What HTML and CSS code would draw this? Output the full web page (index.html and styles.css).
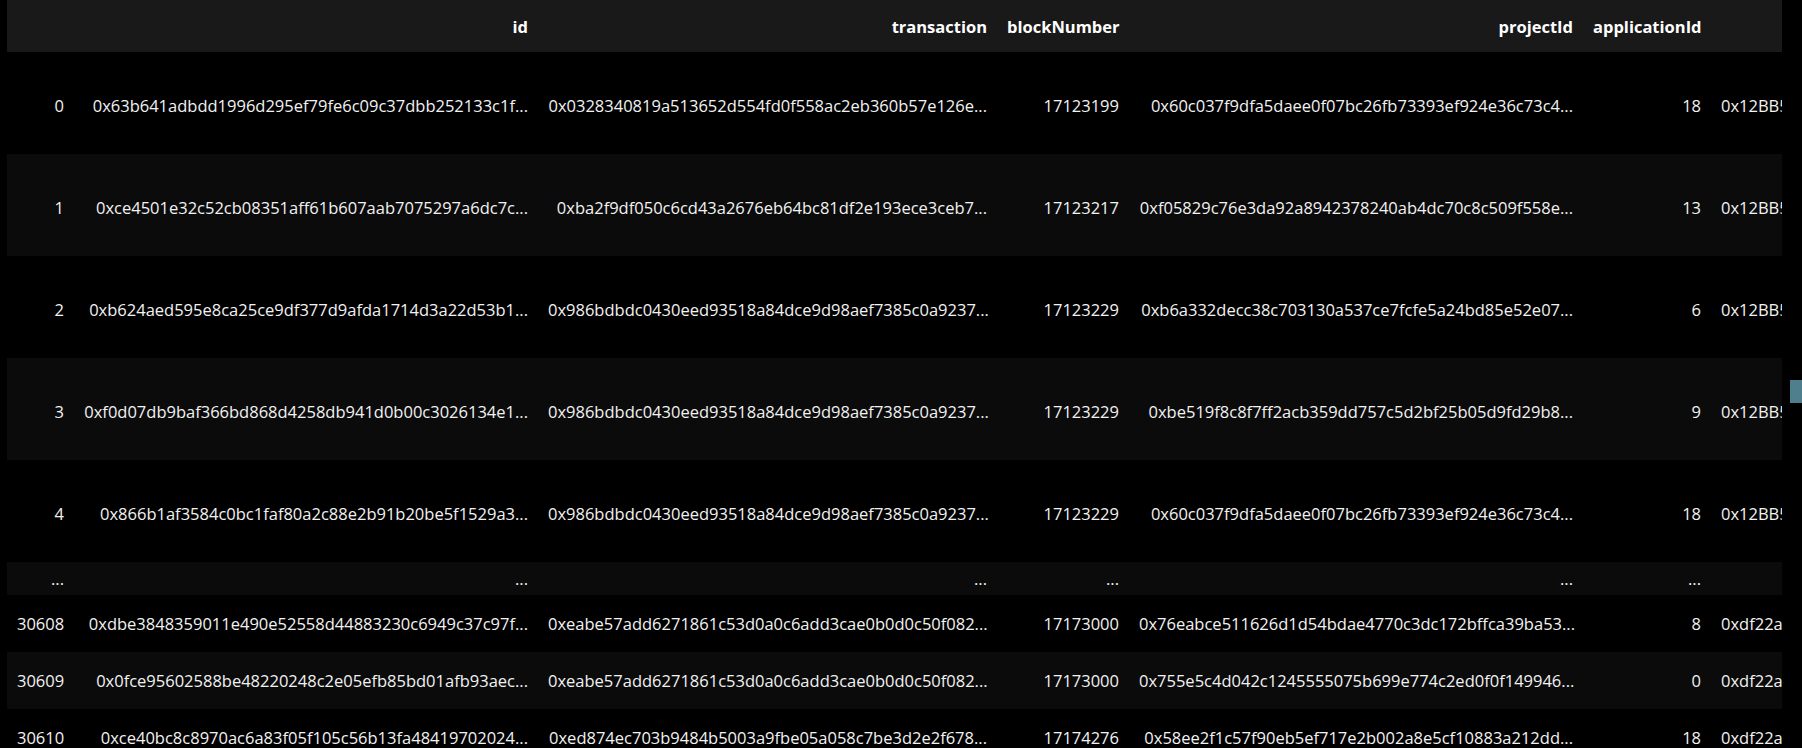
FILE: index.html
```html
<!DOCTYPE html>
<html>
  <head>
    <meta charset="utf-8">
    <title>DataFrame output</title>
    <link rel="stylesheet" href="styles.css">
  </head>
  <body>
    <div class="output">
      <div class="frame">
        <table class="dataframe">
          <colgroup>
            <col class="c-index">
            <col class="c-id">
            <col class="c-tx">
            <col class="c-block">
            <col class="c-project">
            <col class="c-app">
            <col class="c-round">
          </colgroup>
          <thead>
            <tr>
              <th></th>
              <th>id</th>
              <th>transaction</th>
              <th>blockNumber</th>
              <th>projectId</th>
              <th>applicationId</th>
              <th>roundId</th>
            </tr>
          </thead>
          <tbody>
            <tr class="tall">
              <th>0</th>
              <td>0x63b641adbdd1996d295ef79fe6c09c37dbb252133c1f...</td>
              <td>0x0328340819a513652d554fd0f558ac2eb360b57e126e...</td>
              <td>17123199</td>
              <td>0x60c037f9dfa5daee0f07bc26fb73393ef924e36c73c4...</td>
              <td>18</td>
              <td class="last">0x12BB5BBBFE596dbc489A209299B8302c3300fa40</td>
            </tr>
            <tr class="tall">
              <th>1</th>
              <td>0xce4501e32c52cb08351aff61b607aab7075297a6dc7c...</td>
              <td>0xba2f9df050c6cd43a2676eb64bc81df2e193ece3ceb7...</td>
              <td>17123217</td>
              <td>0xf05829c76e3da92a8942378240ab4dc70c8c509f558e...</td>
              <td>13</td>
              <td class="last">0x12BB5BBBFE596dbc489A209299B8302c3300fa40</td>
            </tr>
            <tr class="tall">
              <th>2</th>
              <td>0xb624aed595e8ca25ce9df377d9afda1714d3a22d53b1...</td>
              <td>0x986bdbdc0430eed93518a84dce9d98aef7385c0a9237...</td>
              <td>17123229</td>
              <td>0xb6a332decc38c703130a537ce7fcfe5a24bd85e52e07...</td>
              <td>6</td>
              <td class="last">0x12BB5BBBFE596dbc489A209299B8302c3300fa40</td>
            </tr>
            <tr class="tall">
              <th>3</th>
              <td>0xf0d07db9baf366bd868d4258db941d0b00c3026134e1...</td>
              <td>0x986bdbdc0430eed93518a84dce9d98aef7385c0a9237...</td>
              <td>17123229</td>
              <td>0xbe519f8c8f7ff2acb359dd757c5d2bf25b05d9fd29b8...</td>
              <td>9</td>
              <td class="last">0x12BB5BBBFE596dbc489A209299B8302c3300fa40</td>
            </tr>
            <tr class="tall">
              <th>4</th>
              <td>0x866b1af3584c0bc1faf80a2c88e2b91b20be5f1529a3...</td>
              <td>0x986bdbdc0430eed93518a84dce9d98aef7385c0a9237...</td>
              <td>17123229</td>
              <td>0x60c037f9dfa5daee0f07bc26fb73393ef924e36c73c4...</td>
              <td>18</td>
              <td class="last">0x12BB5BBBFE596dbc489A209299B8302c3300fa40</td>
            </tr>
            <tr class="gap">
              <th>...</th>
              <td>...</td>
              <td>...</td>
              <td>...</td>
              <td>...</td>
              <td>...</td>
              <td>...</td>
            </tr>
            <tr class="mid">
              <th>30608</th>
              <td>0xdbe3848359011e490e52558d44883230c6949c37c97f...</td>
              <td>0xeabe57add6271861c53d0a0c6add3cae0b0d0c50f082...</td>
              <td>17173000</td>
              <td>0x76eabce511626d1d54bdae4770c3dc172bffca39ba53...</td>
              <td>8</td>
              <td class="last">0xdf22a2C8F6BA9376fF17EE13E6154B784ee92094</td>
            </tr>
            <tr class="mid">
              <th>30609</th>
              <td>0x0fce95602588be48220248c2e05efb85bd01afb93aec...</td>
              <td>0xeabe57add6271861c53d0a0c6add3cae0b0d0c50f082...</td>
              <td>17173000</td>
              <td>0x755e5c4d042c1245555075b699e774c2ed0f0f149946...</td>
              <td>0</td>
              <td class="last">0xdf22a2C8F6BA9376fF17EE13E6154B784ee92094</td>
            </tr>
            <tr class="mid">
              <th>30610</th>
              <td>0xce40bc8c8970ac6a83f05f105c56b13fa48419702024...</td>
              <td>0xed874ec703b9484b5003a9fbe05a058c7be3d2e2f678...</td>
              <td>17174276</td>
              <td>0x58ee2f1c57f90eb5ef717e2b002a8e5cf10883a212dd...</td>
              <td>18</td>
              <td class="last">0xdf22a2C8F6BA9376fF17EE13E6154B784ee92094</td>
            </tr>
          </tbody>
        </table>
      </div>
      <div class="ruler-mark"></div>
    </div>
  </body>
</html>
```

FILE: styles.css
```css
body {
  margin: 0;
  background: #000;
  font-family: "Open Sans", "Noto Sans", sans-serif;
  font-size: 16.5px;
  color: #f2f2f2;
}
.output {
  position: relative;
  height: 748px;
  overflow: hidden;
  padding-left: 7px;
}
.frame {
  width: 1775px;
  overflow: hidden;
}
.dataframe {
  table-layout: fixed;
  border-collapse: collapse;
  border-spacing: 0;
  width: 2104px;
  white-space: nowrap;
}
.c-index { width: 67px; }
.c-id { width: 464px; }
.c-tx { width: 459px; }
.c-block { width: 132px; }
.c-project { width: 454px; }
.c-app { width: 128px; }
.c-round { width: 400px; }

th, td {
  padding: 0 10px;
  text-align: right;
  vertical-align: middle;
  overflow: hidden;
}
thead tr {
  height: 52px;
  background: #191919;
}
thead th {
  font-weight: bold;
  color: #fff;
}
tbody th {
  font-weight: normal;
}
td.last {
  text-align: left;
}
tbody tr:nth-child(even) {
  background: #0b0b0b;
}
.tall {
  height: 102px;
}
.tall th,
.tall td {
  padding-top: 4px;
}
.gap {
  height: 33px;
}
.mid {
  height: 57px;
}
.ruler-mark {
  position: absolute;
  right: 0;
  top: 380px;
  width: 12px;
  height: 23px;
  background: #4f7e8c;
}
```
